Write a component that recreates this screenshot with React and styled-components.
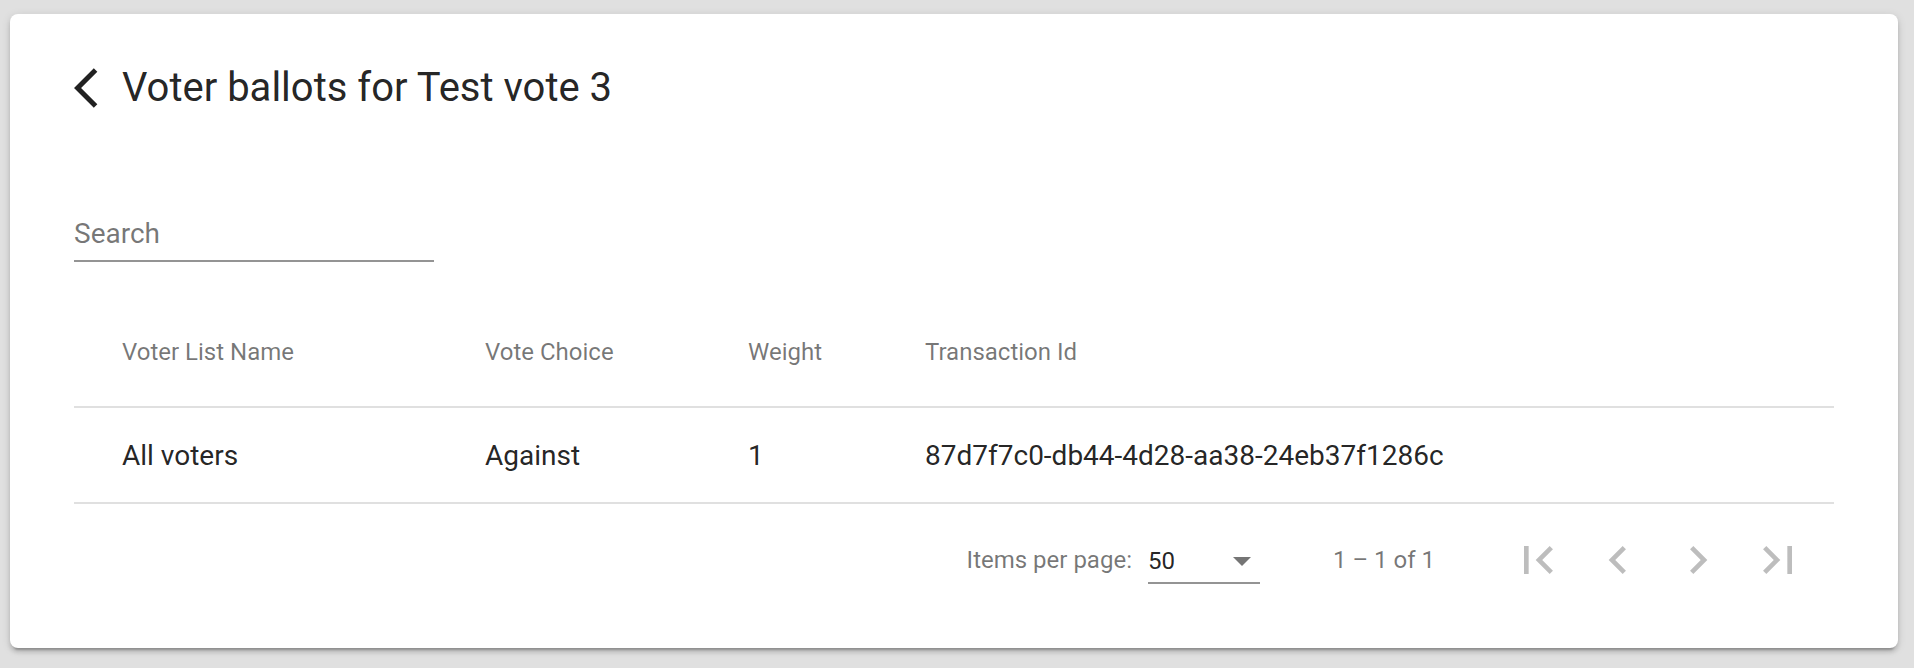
import React from 'react';
import styled, { createGlobalStyle } from 'styled-components';

const GlobalStyle = createGlobalStyle`
  html, body {
    margin: 0;
    padding: 0;
    background: #e0e0e0;
  }
  body {
    font-family: Roboto, "Helvetica Neue", Arial, sans-serif;
  }
  *, *::before, *::after {
    box-sizing: border-box;
  }
`;

const Page = styled.div`
  padding: 14px 16px 20px 10px;
  min-height: 668px;
`;

const Card = styled.section`
  background: #fff;
  border-radius: 8px;
  box-shadow: 0 6px 2px -4px rgba(0, 0, 0, 0.2), 0 4px 4px 0 rgba(0, 0, 0, 0.14),
    0 2px 10px 0 rgba(0, 0, 0, 0.12);
  padding: 50px 64px 32px 64px;
`;

const TitleRow = styled.header`
  display: flex;
  align-items: center;
  height: 48px;
`;

const BackButton = styled.button`
  width: 48px;
  height: 48px;
  padding: 0;
  border: none;
  background: transparent;
  display: flex;
  align-items: center;
  justify-content: flex-start;
  cursor: pointer;
  svg {
    display: block;
    fill: rgba(0, 0, 0, 0.87);
  }
`;

const Title = styled.h1`
  margin: 0;
  font-size: 40px;
  font-weight: 400;
  line-height: 48px;
  color: rgba(0, 0, 0, 0.87);
`;

const SearchField = styled.div`
  margin-top: 94px;
  width: 360px;
`;

const SearchInput = styled.input`
  display: block;
  width: 100%;
  height: 56px;
  padding: 0;
  border: none;
  border-bottom: 2px solid rgba(0, 0, 0, 0.42);
  outline: none;
  background: transparent;
  font-family: Roboto, "Helvetica Neue", Arial, sans-serif;
  font-size: 28px;
  color: rgba(0, 0, 0, 0.87);
  &::placeholder {
    color: rgba(0, 0, 0, 0.54);
  }
`;

const Table = styled.div`
  margin-top: 32px;
`;

const Row = styled.div`
  display: grid;
  grid-template-columns: 411px 263px 177px 1fr;
  align-items: center;
  height: ${(p) => (p.$header ? '114px' : '96px')};
  padding-top: ${(p) => (p.$header ? '4px' : '0')};
  border-bottom: 2px solid rgba(0, 0, 0, 0.12);
  font-size: ${(p) => (p.$header ? '24px' : '28px')};
  font-weight: 400;
  color: ${(p) => (p.$header ? 'rgba(0, 0, 0, 0.54)' : 'rgba(0, 0, 0, 0.87)')};
`;

const Cell = styled.div`
  padding-left: ${(p) => (p.$first ? '48px' : '0')};
  white-space: nowrap;
`;

const Paginator = styled.div`
  display: flex;
  align-items: center;
  justify-content: flex-end;
  height: 112px;
  padding: 0 16px;
  font-size: 24px;
  color: rgba(0, 0, 0, 0.54);
`;

const PageSizeLabel = styled.span`
  margin-right: 16px;
`;

const Select = styled.div`
  width: 112px;
  height: 44px;
  margin-top: 4px;
  display: flex;
  align-items: center;
  justify-content: space-between;
  border-bottom: 2px solid rgba(0, 0, 0, 0.42);
  color: rgba(0, 0, 0, 0.87);
`;

const SelectArrow = styled.span`
  width: 0;
  height: 0;
  margin-right: 9px;
  border-left: 9px solid transparent;
  border-right: 9px solid transparent;
  border-top: 9px solid rgba(0, 0, 0, 0.54);
`;

const RangeLabel = styled.span`
  margin: 0 63px 0 73px;
`;

const IconButton = styled.button`
  width: 80px;
  height: 80px;
  padding: 0;
  border: none;
  background: transparent;
  display: flex;
  align-items: center;
  justify-content: center;
  svg {
    display: block;
    fill: rgba(0, 0, 0, 0.26);
  }
`;

const Icon = ({ d, size }) => (
  <svg width={size} height={size} viewBox="0 0 24 24" aria-hidden="true">
    <path d={d} />
  </svg>
);

const ICONS = {
  back: 'M11.67 3.87L9.9 2.1 0 12l9.9 9.9 1.77-1.77L3.54 12z',
  first: 'M18.41 16.59L13.82 12l4.59-4.59L17 6l-6 6 6 6zM6 6h2v12H6z',
  prev: 'M15.41 7.41L14 6l-6 6 6 6 1.41-1.41L10.83 12z',
  next: 'M10 6L8.59 7.41 13.17 12l-4.58 4.59L10 18l6-6z',
  last: 'M5.59 7.41L10.18 12l-4.59 4.59L7 18l6-6-6-6zM16 6h2v12h-2z',
};

const columns = ['Voter List Name', 'Vote Choice', 'Weight', 'Transaction Id'];
const rows = [['All voters', 'Against', '1', '87d7f7c0-db44-4d28-aa38-24eb37f1286c']];

export default function App() {
  return (
    <>
      <GlobalStyle />
      <Page>
        <Card>
          <TitleRow>
            <BackButton aria-label="Back">
              <Icon d={ICONS.back} size={48} />
            </BackButton>
            <Title>Voter ballots for Test vote 3</Title>
          </TitleRow>

          <SearchField>
            <SearchInput placeholder="Search" />
          </SearchField>

          <Table>
            <Row $header>
              {columns.map((c, i) => (
                <Cell key={c} $first={i === 0}>
                  {c}
                </Cell>
              ))}
            </Row>
            {rows.map((r) => (
              <Row key={r[3]}>
                {r.map((v, i) => (
                  <Cell key={i} $first={i === 0}>
                    {v}
                  </Cell>
                ))}
              </Row>
            ))}
          </Table>

          <Paginator>
            <PageSizeLabel>Items per page:</PageSizeLabel>
            <Select>
              <span>50</span>
              <SelectArrow />
            </Select>
            <RangeLabel>1 – 1 of 1</RangeLabel>
            <IconButton aria-label="First page" disabled>
              <Icon d={ICONS.first} size={56} />
            </IconButton>
            <IconButton aria-label="Previous page" disabled>
              <Icon d={ICONS.prev} size={56} />
            </IconButton>
            <IconButton aria-label="Next page" disabled>
              <Icon d={ICONS.next} size={56} />
            </IconButton>
            <IconButton aria-label="Last page" disabled>
              <Icon d={ICONS.last} size={56} />
            </IconButton>
          </Paginator>
        </Card>
      </Page>
    </>
  );
}
